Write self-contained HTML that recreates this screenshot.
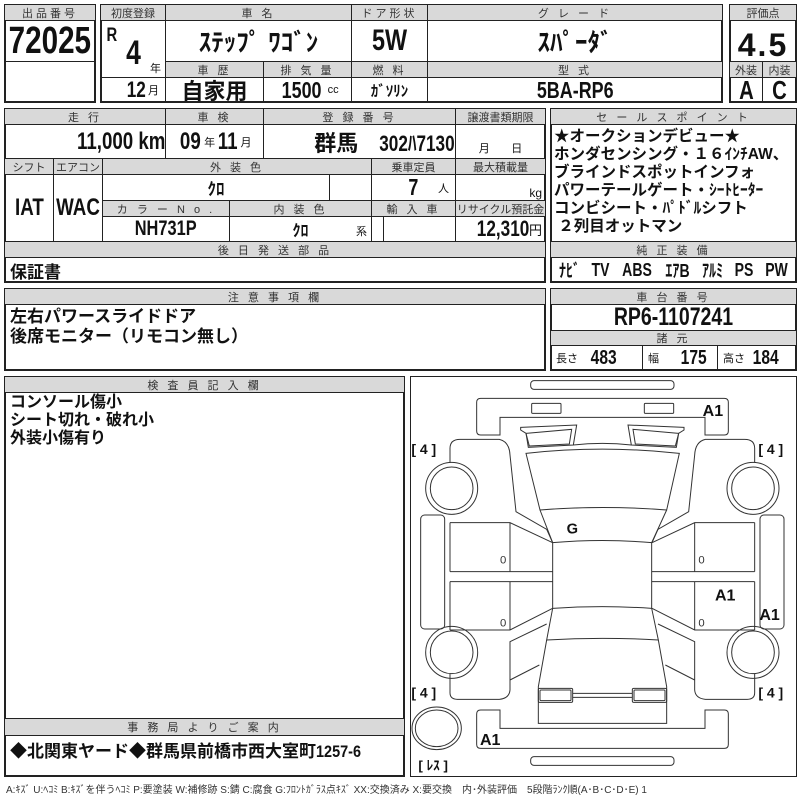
<!DOCTYPE html>
<html><head><meta charset="utf-8"><style>
*{margin:0;padding:0;box-sizing:border-box}
body{width:800px;height:800px;background:#fff;position:relative;overflow:hidden;font-family:"Liberation Sans","Noto Sans CJK JP",sans-serif;color:#111}
.c{position:absolute;border:1px solid #222;display:flex;align-items:center;justify-content:center;white-space:nowrap;overflow:hidden}
.h{background:#d9d9d9;font-family:"Liberation Sans","Noto Sans CJK JP",sans-serif;font-size:11px;color:#333;letter-spacing:3px;font-weight:normal}
.b{font-weight:bold;font-family:"Liberation Sans","Noto Sans CJK JP",sans-serif}
.j{font-weight:bold;font-family:"Liberation Sans","Noto Sans CJK JP",sans-serif}
.s{font-size:11px;font-weight:normal}
.n{display:inline-block;transform:scaleX(.78);font-weight:bold}
.box{position:absolute;border:2px solid #222}
</style></head><body>
<!-- block1 -->
<div class="box" style="left:4px;top:4px;width:92px;height:99px"></div>
<div class="c h" style="left:4px;top:4px;width:92px;height:17px">出品番号</div>
<div class="c" style="left:4px;top:20px;width:92px;height:42px;font-size:38px"><span class="n">72025</span></div>
<div class="c" style="left:4px;top:61px;width:92px;height:42px"></div>
<!-- block2 -->
<div class="box" style="left:100px;top:4px;width:623px;height:99px"></div>
<div class="c h" style="left:100px;top:4px;width:66px;height:17px;letter-spacing:0">初度登録</div>
<div class="c h" style="left:165px;top:4px;width:187px;height:17px">車 名</div>
<div class="c h" style="left:351px;top:4px;width:77px;height:17px">ドア形状</div>
<div class="c h" style="left:427px;top:4px;width:296px;height:17px">グ レ ー ド</div>
<div class="c" style="left:100px;top:20px;width:66px;height:58px"><span class="n" style="position:absolute;left:4px;top:4px;font-size:19px">R</span><span class="n" style="font-size:34px;margin-top:8px">4</span><span class="s" style="position:absolute;right:4px;bottom:1px">年</span></div>
<div class="c" style="left:100px;top:77px;width:66px;height:26px;justify-content:flex-end;padding-right:6px"><span class="n" style="font-size:22px">12</span><span class="s">月</span></div>
<div class="c j" style="left:165px;top:20px;width:187px;height:42px;font-size:25px">ｽﾃｯﾌﾟ ﾜｺﾞﾝ</div>
<div class="c" style="left:351px;top:20px;width:77px;height:42px;font-size:30px"><span class="n">5W</span></div>
<div class="c j" style="left:427px;top:20px;width:296px;height:42px;font-size:25px">ｽﾊﾟｰﾀﾞ</div>
<div class="c h" style="left:165px;top:61px;width:99px;height:17px">車 歴</div>
<div class="c h" style="left:263px;top:61px;width:89px;height:17px">排 気 量</div>
<div class="c h" style="left:351px;top:61px;width:77px;height:17px">燃 料</div>
<div class="c h" style="left:427px;top:61px;width:296px;height:17px">型 式</div>
<div class="c j" style="left:165px;top:77px;width:99px;height:26px;font-size:22px">自家用</div>
<div class="c" style="left:263px;top:77px;width:89px;height:26px"><span class="n" style="font-size:23px">1500</span><span class="s">cc</span></div>
<div class="c j" style="left:351px;top:77px;width:77px;height:26px;font-size:15px">ｶﾞｿﾘﾝ</div>
<div class="c" style="left:427px;top:77px;width:296px;height:26px;font-size:23px"><span class="n">5BA-RP6</span></div>
<!-- block3 -->
<div class="box" style="left:729px;top:4px;width:68px;height:99px"></div>
<div class="c h" style="left:729px;top:4px;width:68px;height:17px;letter-spacing:0">評価点</div>
<div class="c" style="left:729px;top:20px;width:68px;height:42px;font-size:32px;padding-top:8px"><span class="n" style="transform:none;letter-spacing:2px">4.5</span></div>
<div class="c h" style="left:729px;top:61px;width:34px;height:17px;letter-spacing:0">外装</div>
<div class="c h" style="left:762px;top:61px;width:35px;height:17px;letter-spacing:0">内装</div>
<div class="c" style="left:729px;top:77px;width:34px;height:26px;font-size:26px"><span class="n">A</span></div>
<div class="c" style="left:762px;top:77px;width:35px;height:26px;font-size:26px"><span class="n">C</span></div>
<!-- row2 -->
<div class="box" style="left:4px;top:108px;width:542px;height:175px"></div>
<div class="c h" style="left:4px;top:108px;width:162px;height:17px">走 行</div>
<div class="c h" style="left:165px;top:108px;width:99px;height:17px">車 検</div>
<div class="c h" style="left:263px;top:108px;width:193px;height:17px">登 録 番 号</div>
<div class="c h" style="left:455px;top:108px;width:91px;height:17px;letter-spacing:0">譲渡書類期限</div>
<div class="c" style="left:4px;top:124px;width:162px;height:35px;font-size:24px;justify-content:flex-end;padding-right:0"><span class="n" style="transform-origin:right center">11,000 km</span></div>
<div class="c" style="left:165px;top:124px;width:99px;height:35px"><span class="n" style="font-size:24px">09</span><span class="s">年</span><span class="n" style="font-size:24px">11</span><span class="s">月</span></div>
<div class="c j" style="left:263px;top:124px;width:193px;height:35px;font-size:22px;justify-content:flex-end;padding-right:0">群馬&nbsp;<span class="n" style="transform-origin:right center;margin-left:-6px">302ﾊ7130</span></div>
<div class="c s" style="left:455px;top:124px;width:91px;height:35px;align-items:flex-end;padding-bottom:2px;justify-content:space-around">月 &nbsp; &nbsp; &nbsp; 日</div>
<div class="c h" style="left:4px;top:158px;width:50px;height:17px;letter-spacing:0">シフト</div>
<div class="c h" style="left:53px;top:158px;width:50px;height:17px;letter-spacing:0">エアコン</div>
<div class="c h" style="left:102px;top:158px;width:270px;height:17px">外 装 色</div>
<div class="c h" style="left:371px;top:158px;width:85px;height:17px;letter-spacing:0">乗車定員</div>
<div class="c h" style="left:455px;top:158px;width:91px;height:17px;letter-spacing:0">最大積載量</div>
<div class="c" style="left:4px;top:174px;width:50px;height:68px;font-size:24px"><span class="n">IAT</span></div>
<div class="c" style="left:53px;top:174px;width:50px;height:68px;font-size:24px"><span class="n">WAC</span></div>
<div class="c j" style="left:102px;top:174px;width:228px;height:27px;font-size:17px">ｸﾛ</div>
<div class="c" style="left:329px;top:174px;width:43px;height:27px"></div>
<div class="c" style="left:371px;top:174px;width:85px;height:27px;justify-content:flex-end;padding-right:6px"><span class="n" style="font-size:23px">7</span>&nbsp;&nbsp;&nbsp;&nbsp;<span class="s">人</span></div>
<div class="c s" style="left:455px;top:174px;width:91px;height:27px;justify-content:flex-end;align-items:flex-end;padding-right:3px;font-size:12px">kg</div>
<div class="c h" style="left:102px;top:200px;width:128px;height:17px">カ ラ ー N o .</div>
<div class="c h" style="left:229px;top:200px;width:143px;height:17px">内 装 色</div>
<div class="c h" style="left:371px;top:200px;width:85px;height:17px">輸 入 車</div>
<div class="c h" style="left:455px;top:200px;width:91px;height:17px;letter-spacing:0">リサイクル預託金</div>
<div class="c" style="left:102px;top:216px;width:128px;height:26px;font-size:21px"><span class="n">NH731P</span></div>
<div class="c" style="left:229px;top:216px;width:143px;height:26px"><span class="j" style="font-size:16px">ｸﾛ</span><span class="s" style="position:absolute;right:4px;bottom:2px">系</span></div>
<div class="c" style="left:371px;top:216px;width:13px;height:26px"></div>
<div class="c" style="left:383px;top:216px;width:73px;height:26px"></div>
<div class="c" style="left:455px;top:216px;width:91px;height:26px;justify-content:flex-end;padding-right:3px"><span class="n" style="font-size:22px;transform-origin:right center">12,310</span><span class="s" style="font-size:13px">円</span></div>
<div class="c h" style="left:4px;top:241px;width:542px;height:17px">後 日 発 送 部 品</div>
<div class="c j" style="left:4px;top:257px;width:542px;height:26px;font-size:17px;justify-content:flex-start;padding-left:5px">保証書</div>
<!-- sales -->
<div class="box" style="left:550px;top:108px;width:247px;height:175px"></div>
<div class="c h" style="left:550px;top:108px;width:247px;height:17px">セ ー ル ス ポ イ ン ト</div>
<div class="c j" style="left:550px;top:124px;width:247px;height:118px;font-size:15.5px;line-height:18px;display:block;padding:3px 0 0 3px">★オークションデビュー★<br>ホンダセンシング・１６ｲﾝﾁAW、<br>ブラインドスポットインフォ<br>パワーテールゲート・ｼｰﾄﾋｰﾀｰ<br>コンビシート・ﾊﾟﾄﾞﾙシフト<br>&nbsp;２列目オットマン</div>
<div class="c h" style="left:550px;top:241px;width:247px;height:17px">純 正 装 備</div>
<div class="c" style="left:550px;top:257px;width:247px;height:26px;font-size:18px;justify-content:space-around;padding:0 2px"><span class="n">ﾅﾋﾞ</span><span class="n">TV</span><span class="n">ABS</span><span class="n">ｴｱB</span><span class="n">ｱﾙﾐ</span><span class="n">PS</span><span class="n">PW</span></div>
<!-- row3 -->
<div class="box" style="left:4px;top:288px;width:542px;height:83px"></div>
<div class="c h" style="left:4px;top:288px;width:542px;height:17px">注 意 事 項 欄</div>
<div class="c j" style="left:4px;top:304px;width:542px;height:67px;font-size:17px;line-height:20px;display:block;padding:2px 0 0 5px">左右パワースライドドア<br>後席モニター（リモコン無し）</div>
<div class="box" style="left:550px;top:288px;width:247px;height:83px"></div>
<div class="c h" style="left:550px;top:288px;width:247px;height:17px">車 台 番 号</div>
<div class="c" style="left:550px;top:304px;width:247px;height:27px;font-size:25px"><span class="n">RP6-1107241</span></div>
<div class="c h" style="left:550px;top:330px;width:247px;height:16px">諸 元</div>
<div class="c" style="left:550px;top:345px;width:93px;height:26px;justify-content:flex-start;padding-left:5px"><span class="s">長さ</span>&nbsp;&nbsp;<span class="n" style="font-size:20px">483</span></div>
<div class="c" style="left:642px;top:345px;width:76px;height:26px;justify-content:flex-start;padding-left:5px"><span class="s">幅</span>&nbsp;&nbsp;&nbsp;&nbsp;<span class="n" style="font-size:20px">175</span></div>
<div class="c" style="left:717px;top:345px;width:80px;height:26px;justify-content:flex-start;padding-left:5px"><span class="s">高さ</span>&nbsp;<span class="n" style="font-size:20px">184</span></div>
<!-- row4 -->
<div class="box" style="left:4px;top:376px;width:401px;height:401px"></div>
<div class="c h" style="left:4px;top:376px;width:401px;height:17px">検 査 員 記 入 欄</div>
<div class="c j" style="left:4px;top:392px;width:401px;height:327px;font-size:16px;line-height:18px;display:block;padding:1px 0 0 5px;border-bottom:none">コンソール傷小<br>シート切れ・破れ小<br>外装小傷有り</div>
<div class="c h" style="left:4px;top:718px;width:401px;height:18px">事 務 局 よ り ご 案 内</div>
<div class="c j" style="left:4px;top:735px;width:401px;height:42px;font-size:17px;display:block;padding:1px 0 0 5px">◆北関東ヤード◆群馬県前橋市西大室町<span class="n" style="transform-origin:left center;transform:scaleX(.85)">1257-6</span></div>
<div class="box" style="left:410px;top:376px;width:387px;height:401px;border-width:1px"></div>
<svg style="position:absolute;left:400px;top:370px" width="400" height="430" viewBox="0 0 1200 1290" fill="none" stroke="#333" stroke-width="3">
<rect x="392" y="32" width="430" height="26" rx="10"/>
<path d="M300,195 L242,195 Q230,195 230,183 L230,97 Q230,85 242,85 L973,85 Q985,85 985,97 L985,183 Q985,195 973,195 L915,195 L915,142 L300,142 Z"/>
<rect x="395" y="100" width="88" height="30" rx="3"/><rect x="733" y="100" width="88" height="30" rx="3"/>
<path d="M362,172 L530,165 L520,225 L385,232 L378,190 L362,180 Z"/>
<path d="M378,190 L515,178 L508,222 L388,228 Z"/>
<path d="M852,172 L684,165 L694,225 L829,232 L836,190 L852,180 Z"/>
<path d="M836,190 L699,178 L706,222 L826,228 Z"/>
<path d="M520,225 Q607,215 694,225"/>
<path d="M378,250 Q607,225 838,250 L800,420 Q607,405 420,420 Z"/>
<path d="M420,420 L458,518 Q607,505 755,518 L800,420"/>
<path d="M458,518 L458,715 Q607,705 755,715 L755,518"/>
<path d="M458,715 L440,810 Q607,800 775,810 L755,715"/>
<path d="M440,810 L415,950 L415,1060 L800,1060 L800,950 L775,810"/>
<rect x="415" y="955" width="103" height="42" rx="4"/><rect x="420" y="960" width="93" height="32" rx="3"/>
<rect x="697" y="955" width="103" height="42" rx="4"/><rect x="702" y="960" width="93" height="32" rx="3"/>
<path d="M518,970 L697,970 M518,982 L697,982"/>
<path d="M300,1020 L242,1020 Q230,1020 230,1032 L230,1123 Q230,1135 242,1135 L973,1135 Q985,1135 985,1123 L985,1032 Q985,1020 973,1020 L915,1020 L915,1075 L300,1075 Z"/>
<rect x="392" y="1160" width="430" height="26" rx="10"/>
<g id="L">
<path d="M150,278 L150,235 Q150,208 180,208 L298,208 Q328,215 330,255 L348,425 L440,478 L458,518"/>
<path d="M150,458 L330,458 L458,518 M150,605 L458,605 M150,635 L458,635 M330,458 L330,605 M330,635 L330,780 M150,780 L330,780 L458,715 M150,458 L150,605 M150,635 L150,780"/>
<path d="M150,912 L150,968 Q150,988 172,988 L298,988 Q328,985 330,960 L330,815 L440,762 M330,930 L418,885"/>
<rect x="62" y="435" width="72" height="342" rx="12"/>
<circle cx="155" cy="355" r="78"/><circle cx="155" cy="355" r="64"/>
<circle cx="155" cy="847" r="78"/><circle cx="155" cy="847" r="64"/>
</g>
<use href="#L" transform="translate(1214,0) scale(-1,1)"/>
<ellipse cx="110" cy="1075" rx="74" ry="64"/><ellipse cx="110" cy="1075" rx="64" ry="55"/>
<g stroke="none" fill="#111" font-family="Liberation Sans, sans-serif" font-weight="bold" font-size="48">
<text x="908" y="138">A1</text>
<text x="500" y="490" font-size="44">G</text>
<text x="945" y="692">A1</text>
<text x="1078" y="750">A1</text>
<text x="240" y="1125">A1</text>
<text x="34" y="252" font-size="42">[ 4 ]</text>
<text x="1075" y="252" font-size="42">[ 4 ]</text>
<text x="34" y="982" font-size="42">[ 4 ]</text>
<text x="1075" y="982" font-size="42">[ 4 ]</text>
<text x="55" y="1200" font-size="40" font-family="Liberation Sans, Noto Sans CJK JP, sans-serif">[ ﾚｽ ]</text>
<g font-weight="normal" font-size="34" fill="#333"><text x="300" y="580">0</text><text x="300" y="770">0</text><text x="895" y="580">0</text><text x="895" y="770">0</text></g>
</g>
</svg>
<div style="position:absolute;left:6px;top:781px;font-size:10px;color:#333;white-space:nowrap;font-family:'Liberation Sans','Noto Sans CJK JP',sans-serif">A:ｷｽﾞ U:ﾍｺﾐ B:ｷｽﾞを伴うﾍｺﾐ P:要塗装 W:補修跡 S:錆 C:腐食 G:ﾌﾛﾝﾄｶﾞﾗｽ点ｷｽﾞ XX:交換済み X:要交換　内･外装評価　5段階ﾗﾝｸ順(A･B･C･D･E) 1</div>
</body></html>
